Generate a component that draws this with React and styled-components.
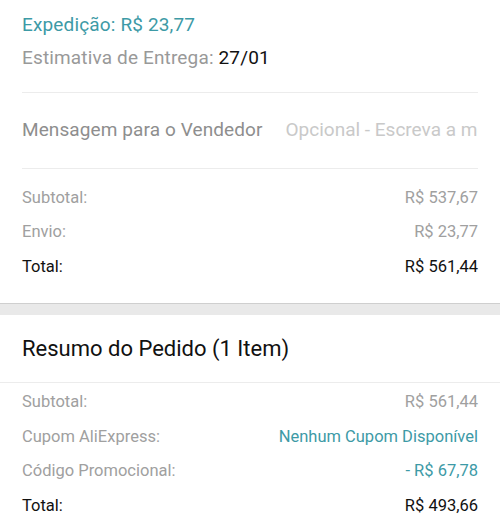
import React from "react";
import styled, { createGlobalStyle } from "styled-components";

const GlobalStyle = createGlobalStyle`
  html, body {
    margin: 0;
    padding: 0;
    background: #ffffff;
  }
  body {
    font-family: Roboto, "Noto Sans", Arial, sans-serif;
  }
`;

const Page = styled.div`
  width: 500px;
  height: 531px;
  overflow: hidden;
  background: #ffffff;
`;

const Section = styled.div`
  padding: 0 22px;
`;

const ShippingBlock = styled.div`
  padding: 8px 0 18px;
  border-bottom: 1px solid #ececec;
`;

const ShippingLine = styled.div`
  font-size: 19px;
  line-height: 33px;
  letter-spacing: 0.15px;
  color: ${(p) => (p.$accent ? "#3d9aa6" : "#999999")};
`;

const Strong = styled.span`
  color: #111111;
`;

const MessageRow = styled.div`
  display: flex;
  align-items: center;
  height: 76px;
  padding-bottom: 3px;
  box-sizing: border-box;
  border-bottom: 1px solid #ececec;
  white-space: nowrap;
  overflow: hidden;
`;

const MessageLabel = styled.span`
  font-size: 19px;
  letter-spacing: 0.1px;
  color: #8e8e8e;
  flex-shrink: 0;
`;

const MessageInput = styled.span`
  margin-left: 23px;
  font-size: 19px;
  color: #c9c9c9;
  overflow: hidden;
  text-overflow: clip;
`;

const Totals = styled.div`
  padding: 11px 0 19px;
`;

const Row = styled.div`
  display: flex;
  justify-content: space-between;
  align-items: center;
  height: 34.5px;
  font-size: 16.5px;
  color: ${(p) => (p.$strong ? "#111111" : "#a0a0a0")};
`;

const Value = styled.span`
  color: ${(p) => (p.$accent ? "#3d9aa6" : "inherit")};
`;

const Band = styled.div`
  height: 11px;
  background: #e9e9e9;
  border-top: 1px solid #cfcfcf;
`;

const Heading = styled.div`
  font-size: 22px;
  color: #111111;
  height: 67px;
  display: flex;
  align-items: center;
  padding: 0 22px;
  border-bottom: 1px solid #ececec;
`;

const Summary = styled.div`
  padding: 2px 22px 0;
`;

const App = () => {
  return (
    <>
      <GlobalStyle />
      <Page>
        <Section>
          <ShippingBlock>
            <ShippingLine $accent>Expedição: R$ 23,77</ShippingLine>
            <ShippingLine>
              Estimativa de Entrega: <Strong>27/01</Strong>
            </ShippingLine>
          </ShippingBlock>
          <MessageRow>
            <MessageLabel>Mensagem para o Vendedor</MessageLabel>
            <MessageInput>Opcional - Escreva a mensagem aqui</MessageInput>
          </MessageRow>
          <Totals>
            <Row>
              <span>Subtotal:</span>
              <Value>R$ 537,67</Value>
            </Row>
            <Row>
              <span>Envio:</span>
              <Value>R$ 23,77</Value>
            </Row>
            <Row $strong>
              <span>Total:</span>
              <Value>R$ 561,44</Value>
            </Row>
          </Totals>
        </Section>
        <Band />
        <Heading>Resumo do Pedido (1 Item)</Heading>
        <Summary>
          <Row>
            <span>Subtotal:</span>
            <Value>R$ 561,44</Value>
          </Row>
          <Row>
            <span>Cupom AliExpress:</span>
            <Value $accent>Nenhum Cupom Disponível</Value>
          </Row>
          <Row>
            <span>Código Promocional:</span>
            <Value $accent>- R$ 67,78</Value>
          </Row>
          <Row $strong>
            <span>Total:</span>
            <Value>R$ 493,66</Value>
          </Row>
        </Summary>
      </Page>
    </>
  );
};

export default App;
